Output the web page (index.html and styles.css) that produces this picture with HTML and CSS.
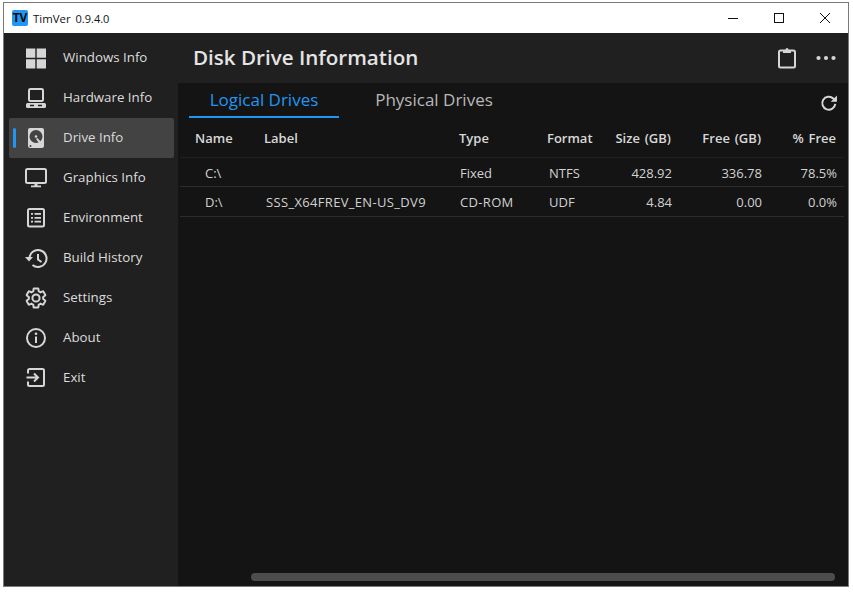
FILE: index.html
```html
<!doctype html>
<html>
<head>
  <meta charset="utf-8">
  <title>TimVer</title>
  <link rel="stylesheet" href="styles.css">
</head>
<body>
  <div class="window">
    <div class="titlebar">
      <span class="app-logo">TV</span>
      <span class="app-name">TimVer</span>
      <span class="app-version">0.9.4.0</span>
      <div class="caption-btns">
        <svg class="caption-btn" viewBox="0 0 46 30"><path d="M18 15.5h10" stroke="#111" fill="none"/></svg>
        <svg class="caption-btn" viewBox="0 0 46 30"><rect x="18.5" y="10.5" width="9" height="9" stroke="#111" fill="none"/></svg>
        <svg class="caption-btn" viewBox="0 0 46 30"><path d="M18 10l10 10M28 10l-10 10" stroke="#111" fill="none"/></svg>
      </div>
    </div>
    <div class="app">
      <nav class="sidebar">
        <a class="nav-item">
          <svg class="nav-icon" viewBox="0 0 24 24"><path class="solid" d="M2 2.500h9.300v9.300H2zM12.700 2.500H22v9.300h-9.300zM2 13.200h9.300v9.300H2zM12.700 13.200H22v9.300h-9.300z"/></svg>
          Windows Info
        </a>
        <a class="nav-item">
          <svg class="nav-icon" viewBox="0 0 24 24"><rect class="line" x="5" y="3" width="14" height="12" rx="1.500"/><path class="solid" fill-rule="evenodd" d="M3.500 17h17a1.500 1.500 0 0 1 1.500 1.500v2a1.500 1.500 0 0 1-1.500 1.500h-17A1.500 1.500 0 0 1 2 20.500v-2A1.500 1.500 0 0 1 3.500 17zM6 18.800v1.400h4v-1.400zM14 18.800v1.400h4v-1.400z"/></svg>
          Hardware Info
        </a>
        <a class="nav-item selected">
          <svg class="nav-icon" viewBox="0 0 24 24"><path class="solid" fill-rule="evenodd" d="M6 2h12a2 2 0 0 1 2 2v16a2 2 0 0 1-2 2H6a2 2 0 0 1-2-2V4a2 2 0 0 1 2-2zM12 4a6.500 6.500 0 1 0 0 13 6.500 6.500 0 0 0 0-13zM6.500 19a1 1 0 1 0 0 2 1 1 0 0 0 0-2z"/><circle class="solid" cx="12" cy="10.500" r="1.300"/><path class="solid" d="M12 13l1.400-.9 4 4.500a1 1 0 0 1-1.600 1.300z"/></svg>
          Drive Info
        </a>
        <a class="nav-item">
          <svg class="nav-icon" viewBox="0 0 24 24"><rect class="line" x="2" y="3" width="20" height="14" rx="1.500"/><path class="solid" d="M10.500 17.500h3V20h-3zM7 19.500h10v1.800H7z"/></svg>
          Graphics Info
        </a>
        <a class="nav-item">
          <svg class="nav-icon" viewBox="0 0 24 24"><rect class="line" x="4" y="3" width="16" height="17.500" rx="1.500"/><path class="solid" d="M7 7h2v1.800H7zM10.500 7H17v1.800h-6.500zM7 10.900h2v1.800H7zM10.500 10.900H17v1.800h-6.500zM7 14.800h2v1.800H7zM10.500 14.800H17v1.800h-6.500z"/></svg>
          Environment
        </a>
        <a class="nav-item">
          <svg class="nav-icon" viewBox="0 0 24 24"><path class="line" d="M5.500 12.500a8.500 8.500 0 1 1 3 6.500"/><path class="solid" d="M1 11h8l-4 4.500z"/><path class="line" d="M14 8v5.500l3.500 2.500"/></svg>
          Build History
        </a>
        <a class="nav-item">
          <svg class="nav-icon" viewBox="0 0 24 24"><path class="line" d="M19.140 12.940c.04-.3.06-.61.06-.94 0-.32-.02-.64-.07-.94l2.030-1.580c.18-.14.23-.41.12-.61l-1.920-3.320c-.12-.22-.37-.29-.59-.22l-2.390.96c-.5-.38-1.030-.7-1.620-.94l-.36-2.540c-.04-.24-.24-.41-.48-.41h-3.840c-.24 0-.43.17-.47.41l-.36 2.540c-.59.24-1.130.57-1.620.94l-2.390-.96c-.22-.08-.47 0-.59.22L2.740 8.870c-.12.21-.08.47.12.61l2.030 1.580c-.05.3-.09.63-.09.94s.02.64.07.94l-2.030 1.580c-.18.14-.23.41-.12.61l1.920 3.320c.12.22.37.29.59.22l2.390-.96c.5.38 1.030.7 1.620.94l.36 2.540c.05.24.24.41.48.41h3.840c.24 0 .44-.17.47-.41l.36-2.540c.59-.24 1.130-.56 1.620-.94l2.390.96c.22.08.47 0 .59-.22l1.920-3.320c.12-.22.07-.47-.12-.61l-2.010-1.580zM12 15.600c-1.980 0-3.600-1.620-3.600-3.600s1.620-3.600 3.600-3.600 3.600 1.620 3.600 3.600-1.620 3.600-3.600 3.600z"/></svg>
          Settings
        </a>
        <a class="nav-item">
          <svg class="nav-icon" viewBox="0 0 24 24"><circle class="line" cx="12" cy="12" r="9"/><path class="solid" d="M11 10.500h2V17h-2z"/><circle class="solid" cx="12" cy="7.800" r="1.300"/></svg>
          About
        </a>
        <a class="nav-item">
          <svg class="nav-icon" viewBox="0 0 24 24"><path class="line" d="M4 7.500V4.500A1.500 1.500 0 0 1 5.500 3h13A1.500 1.500 0 0 1 20 4.500v14a1.500 1.500 0 0 1-1.500 1.500h-13A1.500 1.500 0 0 1 4 18.500v-3"/><path class="line" d="M2.500 11.500h11M10 7.500l4 4-4 4"/></svg>
          Exit
        </a>
      </nav>
      <main class="main">
        <header class="page-header">
          <h1 class="page-title">Disk Drive Information</h1>
          <svg class="head-icon clip" viewBox="0 0 24 24"><path class="line" d="M8 4.500H5.500A1.500 1.500 0 0 0 4 6v14a1.500 1.500 0 0 0 1.500 1.500h13A1.500 1.500 0 0 0 20 20V6a1.500 1.500 0 0 0-1.500-1.500H16"/><path class="solid" d="M8 3.500h2.500a1.500 1.500 0 0 1 3 0H16v3.500H8z"/></svg>
          <svg class="head-icon more" viewBox="0 0 24 24"><circle class="solid" cx="4.500" cy="12" r="2.100"/><circle class="solid" cx="12" cy="12" r="2.100"/><circle class="solid" cx="19.500" cy="12" r="2.100"/></svg>
        </header>
        <div class="content">
          <div class="tabs">
            <span class="tab active">Logical Drives</span>
            <span class="tab">Physical Drives</span>
            <svg class="refresh" viewBox="0 0 24 24"><path class="line heavy" d="M19.500 13a7.800 7.800 0 1 1-2.300-6.300L20 9"/><path class="solid" d="M21.500 3v7.500H14z"/></svg>
          </div>
          <div class="grid-row head">
            <div>Name</div><div>Label</div><div>Type</div><div>Format</div>
            <div class="num">Size (GB)</div><div class="num">Free (GB)</div><div class="num">% Free</div>
          </div>
          <div class="grid-row first">
            <div class="drive">C:\</div><div></div><div class="type">Fixed</div><div>NTFS</div>
            <div class="num">428.92</div><div class="num">336.78</div><div class="num">78.5%</div>
          </div>
          <div class="grid-row">
            <div class="drive">D:\</div><div class="caps">SSS_X64FREV_EN-US_DV9</div><div class="type caps">CD-ROM</div><div>UDF</div>
            <div class="num">4.84</div><div class="num">0.00</div><div class="num">0.0%</div>
          </div>
          <div class="scroll-track"><div class="scroll-thumb"></div></div>
        </div>
      </main>
    </div>
  </div>
</body>
</html>
```
FILE: styles.css
```css
body {
  margin: 0;
  background: #fff;
  font-family: "Open Sans", "Liberation Sans", sans-serif;
  overflow: hidden;
}
.window {
  width: 844px;
  height: 583px;
  margin: 2px 0 0 3px;
  border: 1px solid #7a7a7a;
  display: flex;
  flex-direction: column;
}
.titlebar {
  height: 30px;
  flex: none;
  background: #fff;
  display: flex;
  align-items: center;
  padding-left: 8px;
  font-size: 11.400px;
  color: #111;
}
.app-logo {
  width: 16px;
  height: 16px;
  border-radius: 2px;
  background: #2196f3;
  color: #0a0a0a;
  font-size: 12px;
  font-weight: 700;
  line-height: 16px;
  text-align: center;
  margin-right: 5px;
}
.app-version {
  margin-left: 5px;
  font-size: 11px;
}
.caption-btns {
  margin-left: auto;
  display: flex;
}
.caption-btn {
  width: 46px;
  height: 30px;
}
.app {
  flex: 1;
  display: flex;
  min-height: 0;
}
.solid {
  fill: #d6d6d6;
}
.line {
  fill: none;
  stroke: #d6d6d6;
  stroke-width: 2;
}
.heavy {
  stroke-width: 2.400;
}
.sidebar {
  width: 174px;
  flex: none;
  background: #202020;
  padding-top: 5px;
  box-sizing: border-box;
}
.nav-item {
  height: 40px;
  margin: 0 4px 0 5px;
  padding: 0 0 2px 15px;
  box-sizing: border-box;
  display: flex;
  align-items: center;
  gap: 15px;
  font-size: 13.300px;
  color: #dcdcdc;
  border-radius: 2px;
  position: relative;
}
.nav-item.selected {
  background: #434343;
}
.nav-item.selected::before {
  content: "";
  position: absolute;
  left: 4px;
  top: 10px;
  width: 3px;
  height: 20px;
  border-radius: 2px;
  background: #2196f3;
}
.nav-icon {
  width: 24px;
  height: 24px;
  flex: none;
  margin-top: 2px;
}
.main {
  flex: 1;
  min-width: 0;
  display: flex;
  flex-direction: column;
}
.page-header {
  height: 50px;
  flex: none;
  background: #202020;
  display: flex;
  align-items: center;
  padding: 0 10px 0 15px;
}
.page-title {
  margin: 0 0 3px;
  font-size: 20.600px;
  font-weight: 600;
  color: #e4e4e4;
}
.head-icon {
  width: 24px;
  height: 24px;
}
.clip {
  margin-left: auto;
}
.more {
  margin-left: 15px;
}
.content {
  flex: 1;
  background: #141414;
  display: flex;
  flex-direction: column;
  padding-left: 2px;
}
.tabs {
  height: 36px;
  flex: none;
  display: flex;
  padding-left: 9px;
  margin-right: 9px;
}
.tab {
  width: 150px;
  height: 35px;
  margin-right: 20px;
  text-align: center;
  font-size: 17px;
  line-height: 33px;
  color: #b8b8b8;
  box-sizing: border-box;
}
.tab.active {
  color: #2196f3;
  border-bottom: 2px solid #2196f3;
}
.refresh {
  width: 20px;
  height: 20px;
  margin-left: auto;
  margin-top: 10px;
}
.grid-row {
  display: grid;
  grid-template-columns: 84px 195px 88px 60px 65px 90px 75px;
  height: 29px;
  align-items: center;
  width: 664px;
  border-bottom: 1px solid #2c2c2c;
  font-size: 13px;
  color: #d2d2d2;
}
.grid-row.first {
  height: 27px;
  padding-top: 1px;
}
.grid-row > div {
  padding-left: 2px;
  white-space: nowrap;
}
.grid-row .drive {
  padding-left: 25px;
}
.grid-row .type {
  padding-left: 1px;
}
.caps {
  letter-spacing: .33px;
}
.num {
  text-align: right;
}
.grid-row.head {
  height: 38px;
  font-weight: 600;
  color: #d8d8d8;
  border-bottom-color: #1f1f1f;
}
.grid-row.head > div {
  padding-left: 0;
}
.grid-row.head > div:first-child {
  padding-left: 15px;
}
.grid-row.head .num {
  padding-right: 1px;
  word-spacing: 1.500px;
}
.scroll-track {
  margin-top: auto;
  padding: 0 13px 5px 71px;
}
.scroll-thumb {
  height: 8px;
  border-radius: 4px;
  background: #4d4d4d;
}
```
